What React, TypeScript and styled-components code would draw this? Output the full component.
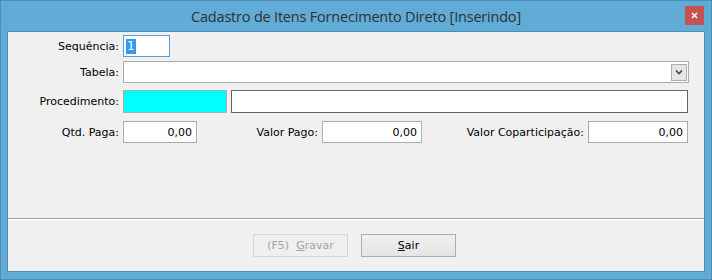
import React from "react";
import styled, { createGlobalStyle } from "styled-components";

const Global = createGlobalStyle`
  html, body { margin: 0; padding: 0; background: #ffffff; }
  body { width: 712px; height: 280px; overflow: hidden; }
  * { box-sizing: border-box; }
`;

const Frame = styled.div`
  width: 712px;
  height: 280px;
  background: #60acd6;
  border: 1px solid #4a8db5;
  display: flex;
  flex-direction: column;
  padding: 0 6px 7px 6px;
`;

const TitleBar = styled.div`
  height: 30px;
  flex: none;
  position: relative;
  display: flex;
  align-items: center;
  justify-content: center;
`;

const Title = styled.span`
  font-family: "Open Sans", "Noto Sans", sans-serif;
  font-size: 14.5px;
  color: #303030;
  letter-spacing: -0.2px;
  margin-top: 1px;
`;

const CloseButton = styled.div`
  position: absolute;
  right: 1px;
  top: 5px;
  width: 19px;
  height: 19px;
  background: #c75050;
  display: flex;
  align-items: center;
  justify-content: center;
`;

const Client = styled.div`
  flex: 1;
  background: #f0f0f0;
  border: 1px solid #4a8db5;
  display: flex;
  flex-direction: column;
`;

const Form = styled.div`
  height: 186px;
  padding-top: 3px;
  display: flex;
  flex-direction: column;
`;

const Row = styled.div<{ $h: number; $mt: number }>`
  display: flex;
  align-items: center;
  height: ${(p) => p.$h}px;
  margin-top: ${(p) => p.$mt}px;
`;

const Label = styled.label<{ $w: number }>`
  width: ${(p) => p.$w}px;
  flex: none;
  text-align: right;
  padding-right: 4px;
  font-family: "DejaVu Sans", sans-serif;
  font-size: 11px;
  color: #000;
  white-space: nowrap;
`;

const Box = styled.div<{ $w?: number; $border?: string; $bg?: string; $ml?: number }>`
  ${(p) => (p.$w ? `width: ${p.$w}px; flex: none;` : "flex: 1;")}
  height: 100%;
  margin-left: ${(p) => p.$ml || 0}px;
  background: ${(p) => p.$bg || "#ffffff"};
  border: 1px solid ${(p) => p.$border || "#ababab"};
  display: flex;
  align-items: center;
  font-family: "DejaVu Sans", sans-serif;
  font-size: 11px;
  color: #000;
`;

const NumberBox = styled(Box)`
  justify-content: flex-end;
  padding-right: 4px;
`;

const Selected = styled.span`
  background: #3399ff;
  color: #fff;
  margin-left: 2px;
  padding: 0 1px;
  font-family: "DejaVu Sans", sans-serif;
  font-size: 12px;
  line-height: 15px;
`;

const SelectBox = styled(Box)`
  justify-content: flex-end;
  padding-right: 1px;
`;

const DropButton = styled.div`
  width: 16px;
  height: 17px;
  border: 1px solid #acacac;
  background: #e5e5e5;
  display: flex;
  align-items: center;
  justify-content: center;
`;

const Separator = styled.div`
  height: 2px;
  border-top: 1px solid #a0a0a0;
  border-bottom: 1px solid #ffffff;
`;

const ButtonBar = styled.div`
  flex: 1;
  display: flex;
  justify-content: center;
  align-items: center;
  gap: 13px;
  padding-right: 3px;
  padding-bottom: 1px;
`;

const Button = styled.button<{ $disabled?: boolean }>`
  width: 95px;
  height: 23px;
  padding: 0;
  border: 1px solid ${(p) => (p.$disabled ? "#d5d5d5" : "#adadad")};
  background: ${(p) =>
    p.$disabled ? "#efefef" : "linear-gradient(#f0f0f0, #e5e5e5)"};
  color: ${(p) => (p.$disabled ? "#a3a3a3" : "#000")};
  font-family: "DejaVu Sans", sans-serif;
  font-size: 11px;
  text-align: center;
`;

const Caption = styled.span`
  white-space: pre;
`;

export default function App() {
  return (
    <>
      <Global />
      <Frame>
        <TitleBar>
          <Title>Cadastro de Itens Fornecimento Direto [Inserindo]</Title>
          <CloseButton>
            <svg width="7" height="7" viewBox="0 0 7 7">
              <path d="M1 1 L6 6 M6 1 L1 6" stroke="#fff" strokeWidth="1.6" />
            </svg>
          </CloseButton>
        </TitleBar>
        <Client>
          <Form>
            <Row $h={22} $mt={0}>
              <Label $w={115}>Sequência:</Label>
              <Box $w={47} $border="#569de5">
                <Selected>1</Selected>
              </Box>
            </Row>
            <Row $h={22} $mt={4}>
              <Label $w={115}>Tabela:</Label>
              <SelectBox $w={566}>
                <DropButton>
                  <svg width="8" height="6" viewBox="0 0 8 6">
                    <path d="M1 1.5 L4 4.5 L7 1.5" stroke="#444" strokeWidth="1.6" fill="none" />
                  </svg>
                </DropButton>
              </SelectBox>
            </Row>
            <Row $h={23} $mt={7}>
              <Label $w={115}>Procedimento:</Label>
              <Box $w={104} $bg="#00ffff" />
              <Box $w={457} $border="#646464" $ml={4} />
            </Row>
            <Row $h={22} $mt={8}>
              <Label $w={115}>Qtd. Paga:</Label>
              <NumberBox $w={74}>0,00</NumberBox>
              <Label $w={125}>Valor Pago:</Label>
              <NumberBox $w={100}>0,00</NumberBox>
              <Label $w={166}>Valor Coparticipação:</Label>
              <NumberBox $w={100}>0,00</NumberBox>
            </Row>
          </Form>
          <Separator />
          <ButtonBar>
            <Button $disabled>
              <Caption>{"(F5)  "}</Caption>
              <u>G</u>ravar
            </Button>
            <Button>
              <u>S</u>air
            </Button>
          </ButtonBar>
        </Client>
      </Frame>
    </>
  );
}
